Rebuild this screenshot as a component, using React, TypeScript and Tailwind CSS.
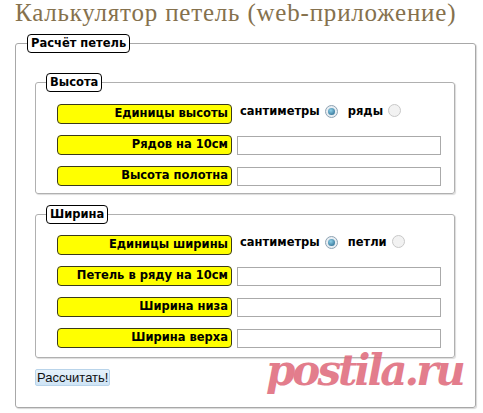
import React, { useState } from 'react';

const labelFont = { fontFamily: '"DejaVu Sans", Verdana, sans-serif' };

function Label({ children }: { children: React.ReactNode }) {
  return (
    <div
      className="flex h-[20px] w-[175px] shrink-0 items-center justify-end rounded-[4px] border border-[#3a3a1a] bg-[#ffff00] pr-[3px] text-[11.5px] font-bold leading-none text-black"
      style={labelFont}
    >
      {children}
    </div>
  );
}

function Field({ label }: { label: string }) {
  return (
    <div className="flex items-center gap-[5px]">
      <Label>{label}</Label>
      <input className="h-[19px] w-[204px] border border-[#aaaaaa] bg-white outline-none" />
    </div>
  );
}

function Radio({ checked, onClick }: { checked: boolean; onClick: () => void }) {
  return (
    <button
      onClick={onClick}
      className={
        checked
          ? 'flex h-[13px] w-[13px] items-center justify-center rounded-full border border-[#8fa3b3] bg-[#e8eef3]'
          : 'h-[13px] w-[13px] rounded-full border border-[#c8c8c8] bg-[#f2f2f2]'
      }
    >
      {checked && <span className="h-[7px] w-[7px] rounded-full bg-[radial-gradient(circle_at_40%_35%,#8fd0e8,#1d5f86)]" />}
    </button>
  );
}

function UnitsRow({ label, alt }: { label: string; alt: string }) {
  const [unit, setUnit] = useState<'cm' | 'alt'>('cm');
  return (
    <div className="flex items-start gap-[5px]">
      <Label>{label}</Label>
      <div
        className="flex items-center pl-[3px] text-[11.5px] font-bold leading-[12px] text-black"
        style={labelFont}
      >
        <span>сантиметры</span>
        <span className="ml-[5px]"><Radio checked={unit === 'cm'} onClick={() => setUnit('cm')} /></span>
        <span className="ml-[10px]">{alt}</span>
        <span className="ml-[5px]"><Radio checked={unit === 'alt'} onClick={() => setUnit('alt')} /></span>
      </div>
    </div>
  );
}

function Legend({ children, className = '' }: { children: React.ReactNode; className?: string }) {
  return (
    <legend
      className={`rounded-[4px] border border-black bg-white px-[3px] text-[11.5px] font-bold leading-[17px] text-black ${className}`}
      style={labelFont}
    >
      {children}
    </legend>
  );
}

export default function App() {
  return (
    <div className="relative h-[413px] w-[483px] overflow-hidden bg-white">
      <h1
        className="h-[34px] whitespace-nowrap pl-[15px] text-[25px] leading-[26px] tracking-[0.8px] text-[#85714d]"
        style={{ fontFamily: '"Liberation Serif", "Times New Roman", serif' }}
      >
        Калькулятор петель (web-приложение)
      </h1>

      <fieldset className="ml-[15px] w-[461px] rounded-[3px] border border-[#a8a8a8] shadow-[1px_1px_1px_#d8d8d8]">
        <Legend className="ml-[11px]">Расчёт петель</Legend>

        <div className="pb-[19px] pl-[19px] pr-[20px]">
          <fieldset className="mt-[20px] rounded-[3px] border border-[#b0b0b0] shadow-[1px_1px_1px_#dcdcdc]">
            <Legend className="ml-[10px]">Высота</Legend>
            <div className="mt-[12px] flex flex-col gap-[11px] pb-[7px] pl-[21px]">
              <UnitsRow label="Единицы высоты" alt="ряды" />
              <Field label="Рядов на 10см" />
              <Field label="Высота полотна" />
            </div>
          </fieldset>

          <fieldset className="mt-[11px] rounded-[3px] border border-[#b0b0b0] shadow-[1px_1px_1px_#dcdcdc]">
            <Legend className="ml-[10px]">Ширина</Legend>
            <div className="mt-[11px] flex flex-col gap-[11px] pb-[9px] pl-[21px]">
              <UnitsRow label="Единицы ширины" alt="петли" />
              <Field label="Петель в ряду на 10см" />
              <Field label="Ширина низа" />
              <Field label="Ширина верха" />
            </div>
          </fieldset>

          <button
            className="mt-[11px] h-[17px] rounded-[2px] border border-[#b9d4ea] bg-[linear-gradient(#e6f2fb,#cfe4f5)] px-[1px] text-[13px] leading-[15px] text-[#111]"
            style={{ fontFamily: '"Liberation Sans", Arial, sans-serif' }}
          >
            Рассчитать!
          </button>
        </div>
      </fieldset>

      <div
        className="pointer-events-none absolute left-[266px] top-[343px] text-[42px] font-bold italic leading-[56px] tracking-[-3px] text-[#e06f80] opacity-90"
        style={{ fontFamily: '"DejaVu Serif", serif' }}
      >
        postila.ru
      </div>
    </div>
  );
}
